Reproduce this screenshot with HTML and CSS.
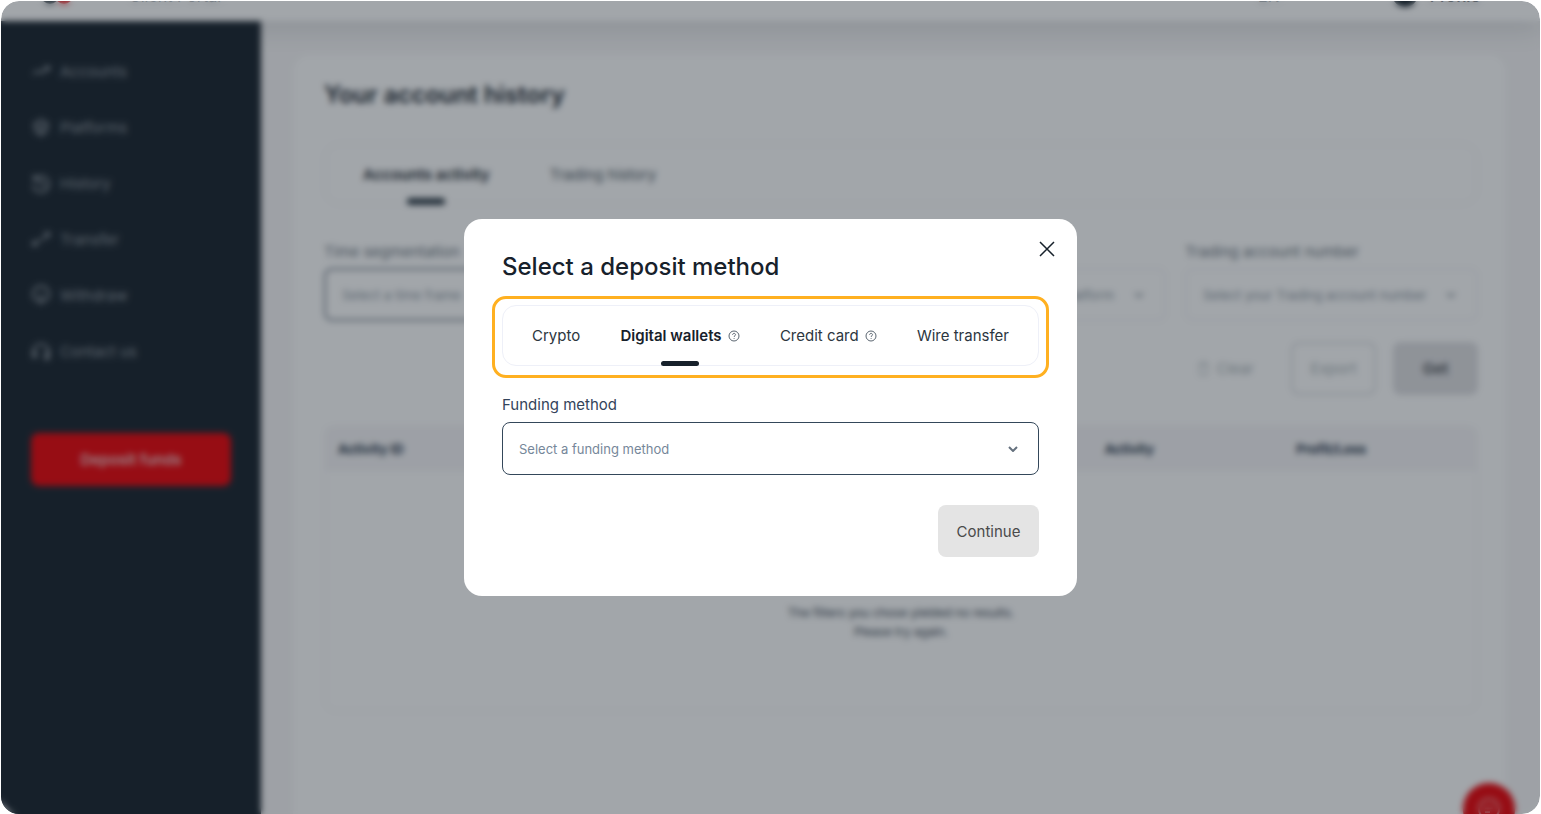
FILE: index.html
```html
<!DOCTYPE html>
<html lang="en">
<head>
    <meta charset="UTF-8">
    <meta name="viewport" content="width=device-width, initial-scale=1.0">
    <title>Select a deposit method</title>
    <link rel="stylesheet" href="styles.css">
</head>
<body>
    <div class="frame">
        <header class="topbar">
            <div class="topbar-content">
                <svg class="logo" viewBox="0 0 32 20" aria-hidden="true">
                    <circle cx="9" cy="9" r="9" fill="#14202a"/>
                    <circle cx="23" cy="9" r="9" fill="#ed0006"/>
                </svg>
                <span class="topbar-title">Client Portal</span>
                <span class="topbar-lang">EN</span>
                <svg class="avatar" viewBox="0 0 26 22" aria-hidden="true">
                    <circle cx="13" cy="9" r="13" fill="#14202a"/>
                </svg>
                <span class="topbar-user">Profile</span>
            </div>
        </header>

        <div class="layout">
            <nav class="sidebar">
                <a href="#" class="nav-link">
                    <svg viewBox="0 0 20 20"><path d="M2 13l5-3 4 2 7-6M13 6h5v4"/></svg>
                    Accounts
                </a>
                <a href="#" class="nav-link">
                    <svg viewBox="0 0 20 20"><path d="M3 7l7-4 7 4-7 4zM4 10v4l6 4 6-4v-4M10 11v6"/></svg>
                    Platforms
                </a>
                <a href="#" class="nav-link">
                    <svg viewBox="0 0 20 20"><path d="M3 2v5h5M3 7a8 8 0 1 1-1 5M10 6v5l4 2"/></svg>
                    History
                </a>
                <a href="#" class="nav-link">
                    <svg viewBox="0 0 20 20"><path d="M13 4h5v4M18 5l-7 6M7 16H2v-4M2 15l8-5"/></svg>
                    Transfer
                </a>
                <a href="#" class="nav-link">
                    <svg viewBox="0 0 20 20"><path d="M6 16a8 8 0 1 1 8 0M10 8v10M7 15l3 3 3-3"/></svg>
                    Withdraw
                </a>
                <a href="#" class="nav-link">
                    <svg viewBox="0 0 20 20"><path d="M2 11a8 8 0 0 1 16 0M2 11h3v5H2zM15 11h3v5h-3zM17 16v2h-4"/></svg>
                    Contact us
                </a>
                <button type="button" class="deposit-btn">Deposit funds</button>
            </nav>

            <main class="main">
                <section class="panel">
                    <h1>Your account history</h1>

                    <div class="page-tabs">
                        <button type="button" class="page-tab active">Accounts activity</button>
                        <button type="button" class="page-tab">Trading history</button>
                    </div>

                    <div class="filters">
                        <div class="filter active">
                            <label for="timeSegmentation">Time segmentation</label>
                            <div class="select-box">
                                <select id="timeSegmentation"><option>Select a time frame</option></select>
                                <svg class="chevron" viewBox="0 0 10 6"><path d="M1 1l4 4 4-4"/></svg>
                            </div>
                        </div>
                        <div class="filter">
                            <label for="activityType">Activity type</label>
                            <div class="select-box">
                                <select id="activityType"><option>Select an activity</option></select>
                                <svg class="chevron" viewBox="0 0 10 6"><path d="M1 1l4 4 4-4"/></svg>
                            </div>
                        </div>
                        <div class="filter">
                            <label for="platform">Platform</label>
                            <div class="select-box">
                                <select id="platform"><option>Select your MetaTrader platform</option></select>
                                <svg class="chevron" viewBox="0 0 10 6"><path d="M1 1l4 4 4-4"/></svg>
                            </div>
                        </div>
                        <div class="filter">
                            <label for="accountNumber">Trading account number</label>
                            <div class="select-box">
                                <select id="accountNumber"><option>Select your Trading account number</option></select>
                                <svg class="chevron" viewBox="0 0 10 6"><path d="M1 1l4 4 4-4"/></svg>
                            </div>
                        </div>
                    </div>

                    <div class="actions">
                        <button type="button" class="clear-btn">
                            <svg viewBox="0 0 14 16"><path d="M1 4h12M3 4v11h8V4M5 4V1h4v3"/></svg>
                            Clear
                        </button>
                        <button type="button" class="export-btn">Export</button>
                        <button type="button" class="get-btn">Get</button>
                    </div>

                    <div class="table-box">
                        <table>
                            <thead>
                                <tr>
                                    <th>Activity ID</th>
                                    <th>Date</th>
                                    <th>Account</th>
                                    <th>Platform</th>
                                    <th>Activity</th>
                                    <th>Profit/Loss</th>
                                </tr>
                            </thead>
                        </table>
                        <p class="no-results">The filters you chose yielded no results.<br>Please try again.</p>
                    </div>
                </section>
            </main>
        </div>

        <button type="button" class="chat-btn" aria-label="Chat">
            <svg viewBox="0 0 24 24"><circle cx="12" cy="12" r="10"/><path d="M8 11h8M8 15h5"/></svg>
        </button>

        <div class="backdrop">
            <div class="modal" role="dialog" aria-labelledby="modalTitle">
                <button type="button" class="close-btn" aria-label="Close">
                    <svg viewBox="0 0 16 16"><path d="M1 1l14 14M15 1L1 15"/></svg>
                </button>
                <h2 id="modalTitle">Select a deposit method</h2>

                <div class="method-tabs">
                    <button type="button" class="method-tab">Crypto</button>
                    <button type="button" class="method-tab active">
                        Digital wallets
                        <svg class="help" viewBox="0 0 12 12"><circle cx="6" cy="6" r="5"/><path d="M4.6 4.8c0-1.9 2.9-1.9 2.9-.1 0 1-1.4 1.1-1.4 2.2M6.1 8.2v.8"/></svg>
                    </button>
                    <button type="button" class="method-tab">
                        Credit card
                        <svg class="help" viewBox="0 0 12 12"><circle cx="6" cy="6" r="5"/><path d="M4.6 4.8c0-1.9 2.9-1.9 2.9-.1 0 1-1.4 1.1-1.4 2.2M6.1 8.2v.8"/></svg>
                    </button>
                    <button type="button" class="method-tab">Wire transfer</button>
                </div>

                <label class="funding-label" for="fundingMethod">Funding method</label>
                <div class="select-box funding-select">
                    <select id="fundingMethod"><option>Select a funding method</option></select>
                    <svg class="chevron" viewBox="0 0 10 6"><path d="M1 1l4 4 4-4"/></svg>
                </div>

                <button type="button" class="continue-btn">Continue</button>
            </div>
        </div>
    </div>
</body>
</html>
```
FILE: styles.css
```css
* {
    box-sizing: border-box;
}
body {
    font-family: 'Inter', sans-serif;
    margin: 0;
    padding: 1px 1px 0;
    background: #ffffff;
    color: #17212b;
}
button,
select {
    font-family: inherit;
    cursor: pointer;
}
svg {
    fill: none;
    stroke: currentColor;
    flex-shrink: 0;
}
.frame {
    position: relative;
    display: flex;
    flex-direction: column;
    height: calc(100vh - 1px);
    border-radius: 18px;
    overflow: hidden;
}

/* Top bar */
.topbar {
    height: 20px;
    background: #ffffff;
    box-shadow: 0 8px 24px rgba(20, 32, 42, 0.14);
    z-index: 1;
}
.topbar-content {
    display: flex;
    align-items: center;
    margin-top: -16px;
    padding: 0 60px 0 40px;
    font-size: 16px;
    line-height: 22px;
}
.logo {
    width: 32px;
    height: 20px;
    stroke: none;
}
.topbar-title {
    margin-left: 56px;
    color: #7c858d;
}
.topbar-lang {
    margin-left: auto;
    color: #7c858d;
}
.avatar {
    width: 26px;
    height: 22px;
    margin-left: 112px;
    stroke: none;
}
.topbar-user {
    margin-left: 12px;
    font-weight: 600;
}

/* Layout */
.layout {
    display: flex;
    flex: 1;
}
.sidebar {
    width: 260px;
    padding: 22px 30px;
    background: #17212b;
    z-index: 2;
}
.nav-link {
    display: flex;
    align-items: center;
    gap: 9px;
    height: 56px;
    color: #8a929a;
    font-size: 15px;
    text-decoration: none;
}
.nav-link svg {
    width: 20px;
    height: 20px;
    stroke-width: 2;
}
.deposit-btn {
    width: 100%;
    height: 53px;
    margin-top: 54px;
    background: #ed0006;
    color: #f3c9cc;
    border: none;
    border-radius: 8px;
    font-size: 15px;
    font-weight: 600;
}
.main {
    flex: 1;
    display: flex;
    padding: 34px 34px 0 32px;
    background: #f8f7f8;
}
.panel {
    flex: 1;
    padding: 20px 28px 0 31px;
    background: #ffffff;
    border-radius: 16px 16px 0 0;
}
h1 {
    margin: 0;
    font-size: 24px;
    line-height: 40px;
    font-weight: 600;
}
.page-tabs {
    display: flex;
    gap: 60px;
    height: 62px;
    margin-top: 28px;
    padding: 0 37px;
    border: 2px solid #f7f6f9;
    border-radius: 16px;
}
.page-tab {
    position: relative;
    padding: 0;
    background: none;
    border: none;
    color: #4a545d;
    font-size: 15px;
}
.page-tab.active {
    color: #17212b;
    font-weight: 600;
}
.page-tab.active::after {
    content: '';
    position: absolute;
    left: calc(50% - 19px);
    bottom: -2px;
    width: 38px;
    height: 7px;
    border-radius: 3px;
    background: #2c3944;
}

/* Filters */
.filters {
    display: grid;
    grid-template-columns: repeat(3, 1fr) 293px;
    gap: 19px;
    margin-top: 37px;
}
.filter label {
    display: block;
    margin-bottom: 6px;
    color: #6c7680;
    font-size: 15px;
    line-height: 20px;
}
.select-box {
    display: flex;
    align-items: center;
    height: 53px;
    padding: 0 20px 0 16px;
    border: 2px solid #f3f2f5;
    border-radius: 8px;
}
.filter.active .select-box {
    border-color: #7a8490;
}
.select-box select {
    flex: 1;
    min-width: 0;
    padding: 0;
    appearance: none;
    background: none;
    border: none;
    color: #8d97a2;
    font-size: 13px;
}
.chevron {
    width: 10px;
    height: 6px;
    color: #65717e;
    stroke-width: 2;
}
.filter .chevron {
    color: #9aa2ab;
}
.actions {
    display: flex;
    justify-content: flex-end;
    gap: 17px;
    margin-top: 21px;
}
.actions button {
    width: 85px;
    height: 53px;
    border: none;
    border-radius: 8px;
    background: none;
    color: #a9b2b6;
    font-size: 15px;
}
.actions .clear-btn {
    display: flex;
    align-items: center;
    width: auto;
    gap: 6px;
    padding: 0 20px;
}
.clear-btn svg {
    width: 13px;
    height: 15px;
}
.actions .export-btn {
    border: 2px solid #dcdde0;
}
.actions .get-btn {
    background: #dfdfe2;
    color: #45494e;
    font-weight: 600;
}

/* Table */
.table-box {
    height: 287px;
    margin-top: 30px;
    border: 2px solid #f8f7f9;
    border-radius: 12px;
}
table {
    width: 100%;
    table-layout: fixed;
    border-collapse: collapse;
}
th {
    height: 44px;
    padding: 0 12px;
    background: #f7f6f8;
    color: #1f3347;
    font-size: 13px;
    text-align: left;
}
.no-results {
    margin: 132px 0 0;
    color: #36424e;
    font-size: 12px;
    line-height: 19px;
    text-align: center;
}
.chat-btn {
    position: absolute;
    right: 25px;
    bottom: -21px;
    display: flex;
    align-items: center;
    justify-content: center;
    width: 52px;
    height: 52px;
    background: #ed0006;
    border: none;
    border-radius: 50%;
    color: #f6a0a2;
}
.chat-btn svg {
    width: 24px;
    height: 24px;
    stroke-width: 2;
}

/* Modal */
.backdrop {
    position: absolute;
    inset: 0;
    z-index: 10;
    display: flex;
    align-items: center;
    justify-content: center;
    border-radius: 18px;
    background: rgba(23, 33, 43, 0.4);
    backdrop-filter: blur(3px);
}
.modal {
    position: relative;
    width: 613px;
    padding: 32px 38px 39px;
    background: #ffffff;
    border-radius: 18px;
}
.close-btn {
    position: absolute;
    top: 22px;
    right: 22px;
    display: flex;
    padding: 0;
    background: none;
    border: none;
    color: #17212b;
}
.close-btn svg {
    width: 16px;
    height: 16px;
    stroke-width: 1.5;
}
.modal h2 {
    margin: 0;
    font-size: 24px;
    line-height: 32px;
    font-weight: 500;
}
.method-tabs {
    position: relative;
    display: flex;
    justify-content: space-between;
    height: 61px;
    margin-top: 22px;
    padding: 0 29px;
    border: 1px solid #eef0f8;
    border-radius: 14px;
}
/* highlight ring around the deposit methods */
.method-tabs::after {
    content: '';
    position: absolute;
    inset: -10px -11px -13px;
    border: 3px solid #ffb020;
    border-radius: 14px;
    pointer-events: none;
}
.method-tab {
    position: relative;
    display: flex;
    align-items: center;
    gap: 6px;
    padding: 0;
    background: none;
    border: none;
    color: #2c3640;
    font-size: 15px;
}
.method-tab.active {
    color: #17212b;
    font-weight: 600;
}
.method-tab.active::after {
    content: '';
    position: absolute;
    left: calc(50% - 19px);
    bottom: -1px;
    width: 38px;
    height: 5px;
    border-radius: 3px;
    background: #17212b;
}
.help {
    width: 12px;
    height: 12px;
    color: #5a6570;
}
.funding-label {
    display: block;
    margin: 27px 0 5px;
    color: #34445a;
    font-size: 15px;
    line-height: 24px;
}
.funding-select {
    border: 1px solid #34475a;
}
.funding-select select {
    color: #76879a;
}
.continue-btn {
    display: block;
    width: 101px;
    height: 52px;
    margin: 30px 0 0 auto;
    background: #e4e4e4;
    border: none;
    border-radius: 8px;
    color: #4a4a4a;
    font-size: 15px;
}
```
